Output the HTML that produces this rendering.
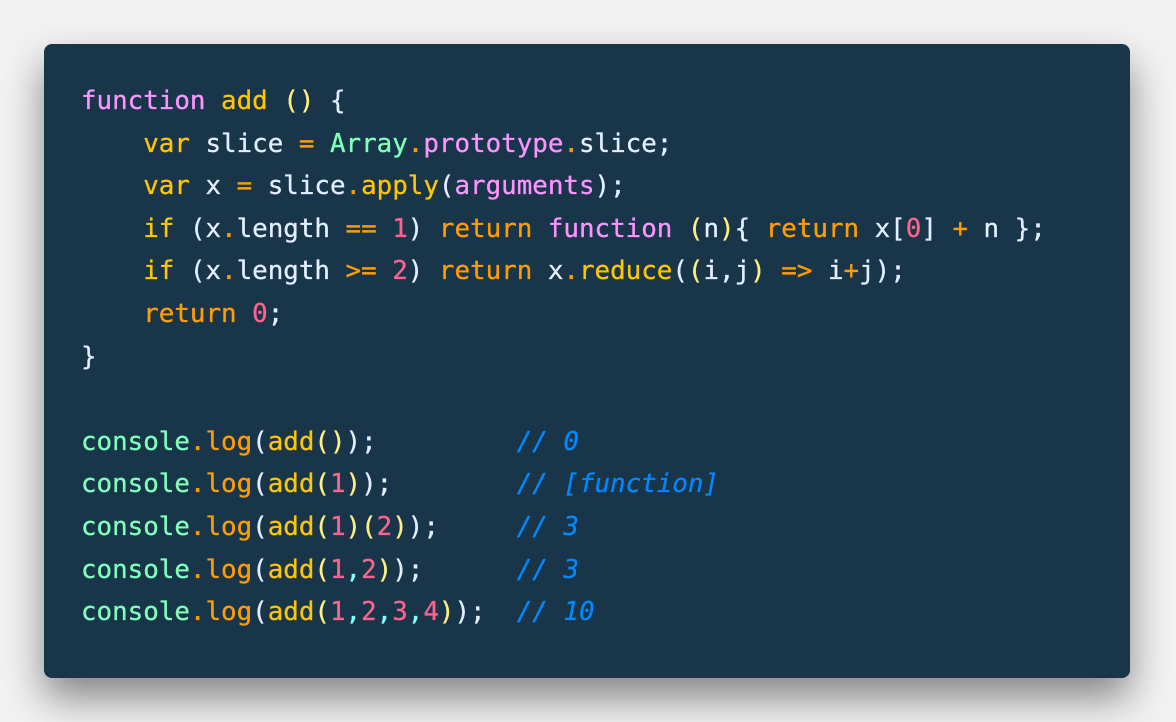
<!DOCTYPE html>
<html><head><style>
html,body{margin:0;padding:0;}
body{width:1176px;height:722px;background:#f2f2f2;position:relative;overflow:hidden;}
.card{position:absolute;left:44px;top:44px;width:1086px;height:634px;background:#193549;border-radius:8px;box-shadow:0 20px 40px rgba(0,0,0,0.45);}
pre{position:absolute;left:37px;top:36px;margin:0;font-family:"DejaVu Sans Mono","Liberation Mono",monospace;font-size:25.85px;line-height:42.6px;color:#e1efff;-webkit-text-stroke:0.3px currentColor;}
.k{color:#ff9d00}.f{color:#fb94ff}.y{color:#ffc600}.p{color:#ffee80}.g{color:#80ffbb}.n{color:#ff628c}.c{color:#0088ff;font-style:italic}.o{color:#ff9d00}.cy{color:#80ffff}.w{color:#e1efff}
.kw{color:#ffc600}
</style></head><body>
<div class="card"><pre><span class="f">function</span> <span class="y">add</span> <span class="p">()</span> {
    <span class="kw">var</span> slice <span class="o">=</span> <span class="g">Array</span><span class="o">.</span><span class="f">prototype</span><span class="o">.</span>slice;
    <span class="kw">var</span> x <span class="o">=</span> slice<span class="o">.</span><span class="y">apply</span>(<span class="f">arguments</span>);
    <span class="kw">if</span> (x<span class="o">.</span>length <span class="o">==</span> <span class="n">1</span>) <span class="k">return</span> <span class="f">function</span> <span class="p">(</span>n<span class="p">)</span>{ <span class="k">return</span> x[<span class="n">0</span>] <span class="o">+</span> n };
    <span class="kw">if</span> (x<span class="o">.</span>length <span class="o">&gt;=</span> <span class="n">2</span>) <span class="k">return</span> x<span class="o">.</span><span class="y">reduce</span>(<span class="p">(</span>i,j<span class="p">)</span> <span class="o">=&gt;</span> i<span class="o">+</span>j);
    <span class="k">return</span> <span class="n">0</span>;
}

<span class="g">console</span><span class="o">.</span><span class="k">log</span>(<span class="y">add</span><span class="p">()</span>);         <span class="c">// 0</span>
<span class="g">console</span><span class="o">.</span><span class="k">log</span>(<span class="y">add</span><span class="p">(</span><span class="n">1</span><span class="p">)</span>);        <span class="c">// [function]</span>
<span class="g">console</span><span class="o">.</span><span class="k">log</span>(<span class="y">add</span><span class="p">(</span><span class="n">1</span><span class="p">)(</span><span class="n">2</span><span class="p">)</span>);     <span class="c">// 3</span>
<span class="g">console</span><span class="o">.</span><span class="k">log</span>(<span class="y">add</span><span class="p">(</span><span class="n">1</span><span class="cy">,</span><span class="n">2</span><span class="p">)</span>);      <span class="c">// 3</span>
<span class="g">console</span><span class="o">.</span><span class="k">log</span>(<span class="y">add</span><span class="p">(</span><span class="n">1</span><span class="cy">,</span><span class="n">2</span><span class="cy">,</span><span class="n">3</span><span class="cy">,</span><span class="n">4</span><span class="p">)</span>);  <span class="c">// 10</span></pre></div>
</body></html>
